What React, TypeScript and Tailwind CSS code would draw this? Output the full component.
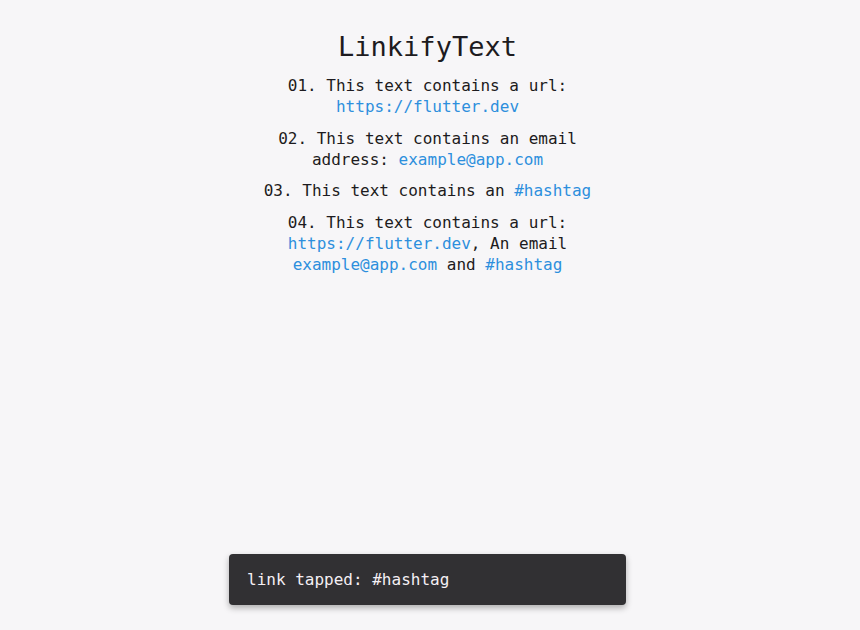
const mono = { fontFamily: '"DejaVu Sans Mono", "Liberation Mono", monospace' }

function Link({ children }: { children: React.ReactNode }) {
  return <span className="text-[#2d8fdd]">{children}</span>
}

export default function App() {
  return (
    <div className="relative h-[630px] w-[860px] overflow-hidden bg-[#f7f6f8] text-[#1d1b20]" style={mono}>
      <div className="flex flex-col items-center pr-[5px] pt-[29px]">
        <h1 className="text-[27px] leading-[36px]">LinkifyText</h1>
        <div className="mt-[10px] flex w-[370px] flex-col gap-[10.5px] text-center text-[16px] leading-[21px]">
          <p>
            01. This text contains a url: <Link>https://flutter.dev</Link>
          </p>
          <p>
            02. This text contains an email address: <Link>example@app.com</Link>
          </p>
          <p>
            03. This text contains an <Link>#hashtag</Link>
          </p>
          <p>
            04. This text contains a url: <Link>https://flutter.dev</Link>, An email{' '}
            <Link>example@app.com</Link> and <Link>#hashtag</Link>
          </p>
        </div>
      </div>

      <div className="absolute bottom-[25px] left-[229px] flex h-[51px] w-[397px] items-center rounded-[4px] bg-[#313033] px-[18px] text-[16px] text-[#f4eff4] shadow-[0_3px_6px_rgba(0,0,0,0.3)]">
        link tapped: #hashtag
      </div>
    </div>
  )
}
